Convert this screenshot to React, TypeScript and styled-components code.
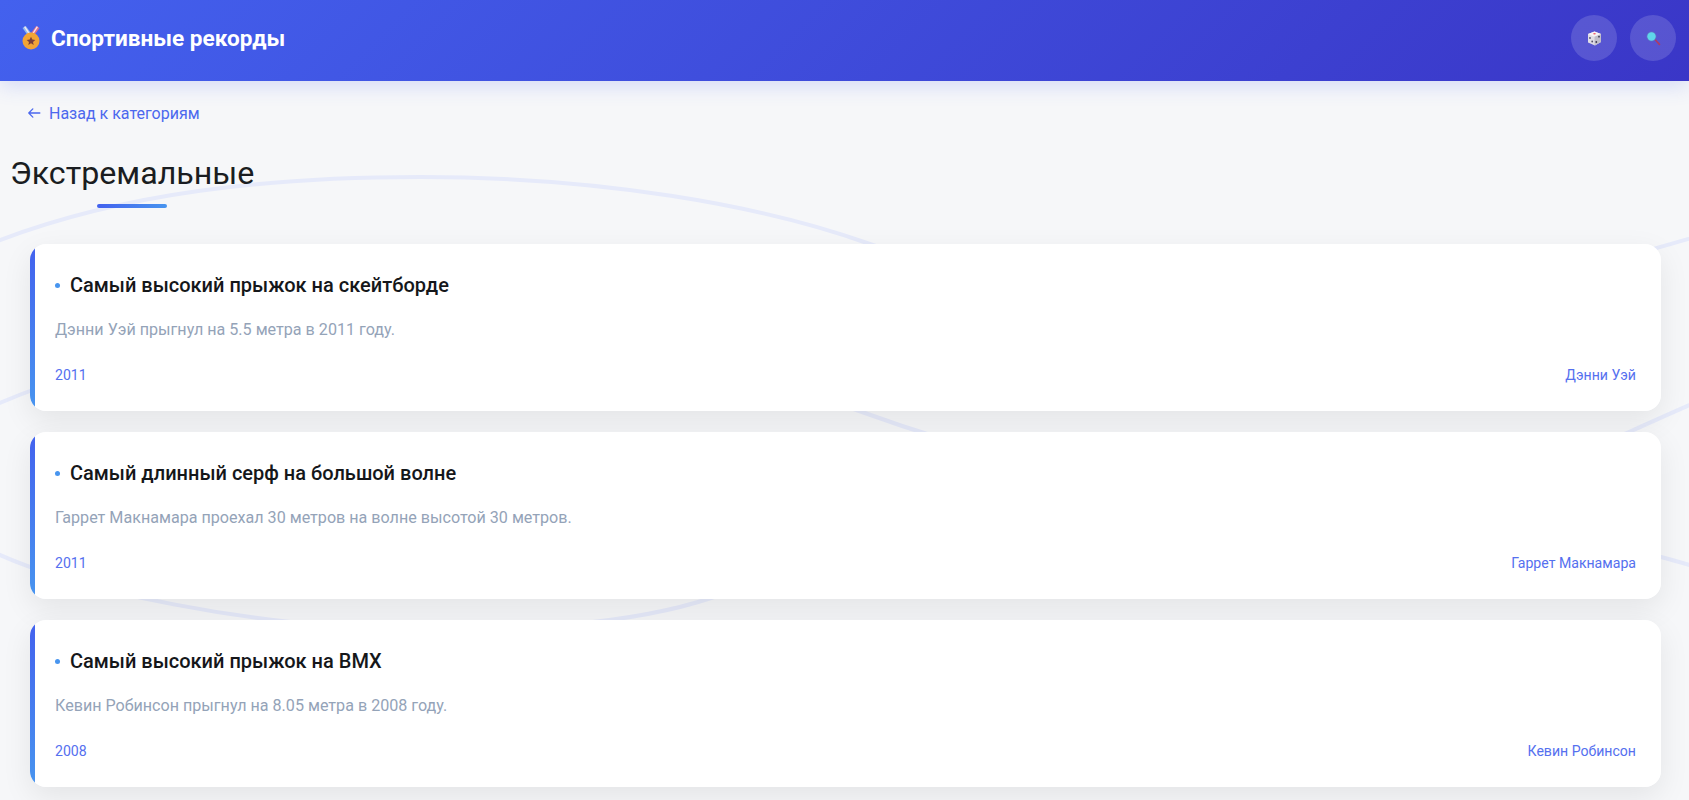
import React from "react";
import styled, { createGlobalStyle } from "styled-components";

const Global = createGlobalStyle`
  * { box-sizing: border-box; }
  html, body { margin: 0; padding: 0; }
  body {
    background: #f6f7f9;
    color: #212529;
    font-family: Roboto, "Noto Sans", sans-serif;
    overflow: hidden;
    height: 800px;
  }
`;

const Page = styled.div`
  position: relative;
  height: 800px;
  overflow: hidden;
`;

const Waves = styled.svg`
  position: absolute;
  inset: 0;
  width: 1689px;
  height: 800px;
  pointer-events: none;
`;

const Header = styled.header`
  position: relative;
  height: 81px;
  padding: 0 13px 5px 20px;
  display: flex;
  align-items: center;
  justify-content: space-between;
  background: linear-gradient(135deg, #4361ee, #3a36c7);
  box-shadow: 0 4px 20px rgba(67, 97, 238, 0.2);
`;

const Brand = styled.div`
  display: flex;
  align-items: center;
  gap: 9px;
  color: #fff;
  font-size: 22.6px;
  font-weight: 700;
`;

const Actions = styled.div`
  display: flex;
  gap: 13px;
`;

const RoundButton = styled.button`
  width: 46px;
  height: 46px;
  padding: 0;
  border: 0;
  border-radius: 50%;
  display: flex;
  align-items: center;
  justify-content: center;
  background: rgba(255, 255, 255, 0.15);
`;

const Main = styled.main`
  position: relative;
  padding: 0 28px 0 30px;
`;

const BackLink = styled.a`
  display: flex;
  align-items: center;
  gap: 8px;
  height: 20px;
  margin: 22px 0 0 -3px;
  font-size: 16px;
  color: #4361ee;
  opacity: 0.95;
`;

const PageTitle = styled.h2`
  position: relative;
  margin: 31px 0 0 -20px;
  width: 245px;
  height: 38px;
  font-size: 32.2px;
  line-height: 38px;
  font-weight: 400;
  color: #1a1d21;
  white-space: nowrap;
`;

const TitleBar = styled.span`
  position: absolute;
  left: 87px;
  top: 50px;
  width: 70px;
  height: 4px;
  border-radius: 2px;
  background: linear-gradient(90deg, #4361ee, #4895ef);
`;

const Cards = styled.div`
  display: flex;
  flex-direction: column;
  gap: 21px;
  margin-top: 52px;
`;

const CardShadow = styled.div`
  border-radius: 16px;
  box-shadow: 0 10px 30px rgba(0, 0, 0, 0.08);
`;

const Card = styled.article`
  position: relative;
  height: 167px;
  overflow: hidden;
  padding: 26px 25px 0;
  background: #fff;
  border-radius: 16px;
`;

const Accent = styled.span`
  position: absolute;
  left: 0;
  top: 0;
  bottom: 0;
  width: 5px;
  background: linear-gradient(180deg, #4361ee, #4895ef);
`;

const CardTitle = styled.h3`
  position: relative;
  margin: 0;
  padding-left: 15px;
  height: 30px;
  font-size: 20px;
  line-height: 30px;
  font-weight: 500;
  color: #15171a;

  &::before {
    content: "";
    position: absolute;
    left: 0;
    top: 13px;
    width: 5px;
    height: 5px;
    border-radius: 50%;
    background: #4895ef;
  }
`;

const Description = styled.p`
  margin: 18px 0 0;
  font-size: 16.12px;
  line-height: 24px;
  color: #94a3b8;
`;

const Meta = styled.div`
  display: flex;
  justify-content: space-between;
  margin-top: 23px;
  font-size: 14.1px;
  line-height: 20px;
  color: #4361ee;
  opacity: 0.9;
`;

const MedalIcon = () => (
  <svg width="22" height="24" viewBox="0 0 22 24">
    <path d="M2.500 2 9 11l3-2.500L5.800 0z" fill="#8fbdf0" />
    <path d="M4 1 9.800 9.800l1-.8L5.200 .3z" fill="#f7e6ee" />
    <path d="M19.500 2 13 11l-3-2.500L16.200 0z" fill="#e0708a" />
    <path d="M18 1 12.200 9.800l-1-.8L16.800 .3z" fill="#f7e6ee" />
    <circle cx="11" cy="15" r="8.500" fill="#f2a436" />
    <path d="m11 10.800 1.300 2.800 3 .3-2.300 2 .7 3-2.700-1.600-2.700 1.600.7-3-2.300-2 3-.3z" fill="#7b3f3a" />
  </svg>
);

const DiceIcon = () => (
  <svg width="15" height="15" viewBox="0 0 15 15">
    <path d="M7.500 .5 14 3v8l-6 3.500L1 11.500V3z" fill="#e0dee6" />
    <path d="M1 3l6.500 2.700L14 3 7.500.5z" fill="#f6f2f4" />
    <path d="M7.500 5.700V14.500l6.500-3.500V3z" fill="#bfbdca" />
    <ellipse cx="7.500" cy="2.800" rx="1.300" ry=".7" fill="#ee5a66" />
    <circle cx="3" cy="7" r=".9" fill="#55536a" />
    <circle cx="5.200" cy="10.500" r=".9" fill="#55536a" />
    <circle cx="12" cy="5.700" r=".9" fill="#3c3a4e" />
    <circle cx="9.300" cy="11" r=".9" fill="#3c3a4e" />
  </svg>
);

const SearchIcon = () => (
  <svg width="15" height="15" viewBox="0 0 15 15">
    <path d="m8.500 9 1-1 5 5.200-1.300 1.300z" fill="#b03a62" />
    <circle cx="5.500" cy="5.500" r="5" fill="#5e6fc4" />
    <circle cx="5.500" cy="5.500" r="4.200" fill="#5fd6ea" />
  </svg>
);

const BackArrow = () => (
  <svg width="14" height="14" viewBox="0 0 24 24" fill="none" stroke="currentColor" strokeWidth="2.200" strokeLinecap="round" strokeLinejoin="round">
    <path d="M22 12H3M10 5l-7 7 7 7" />
  </svg>
);

const records = [
  { title: "Самый высокий прыжок на скейтборде", text: "Дэнни Уэй прыгнул на 5.5 метра в 2011 году.", year: "2011", author: "Дэнни Уэй" },
  { title: "Самый длинный серф на большой волне", text: "Гаррет Макнамара проехал 30 метров на волне высотой 30 метров.", year: "2011", author: "Гаррет Макнамара" },
  { title: "Самый высокий прыжок на BMX", text: "Кевин Робинсон прыгнул на 8.05 метра в 2008 году.", year: "2008", author: "Кевин Робинсон" },
];

export default function App() {
  return (
    <Page>
      <Global />
      <Waves viewBox="0 0 1689 800" fill="none">
        <path
          d="M-20 248C120 190 280 177 420 177C600 177 760 205 867 243C1000 290 1130 320 1260 320C1420 320 1560 275 1720 230"
          stroke="#e6eafa"
          strokeWidth="4"
        />
        <path
          d="M-20 412C120 345 280 340 420 342C600 345 760 375 862 412C1000 462 1130 490 1260 490C1400 490 1520 480 1629 432C1660 418 1700 400 1720 392"
          stroke="#e6eafa"
          strokeWidth="4"
        />
        <path
          d="M-20 545C60 590 270 630 420 630C520 630 630 625 711 598C850 550 1100 500 1260 500C1420 500 1560 530 1661 557C1680 562 1700 568 1720 574"
          stroke="#e6eafa"
          strokeWidth="4"
        />
      </Waves>
      <Header>
        <Brand>
          <MedalIcon />
          Спортивные рекорды
        </Brand>
        <Actions>
          <RoundButton aria-label="Случайный рекорд">
            <DiceIcon />
          </RoundButton>
          <RoundButton aria-label="Поиск">
            <SearchIcon />
          </RoundButton>
        </Actions>
      </Header>
      <Main>
        <BackLink>
          <BackArrow />
          Назад к категориям
        </BackLink>
        <PageTitle>
          Экстремальные
          <TitleBar />
        </PageTitle>
        <Cards>
          {records.map((r) => (
            <CardShadow key={r.title}>
              <Card>
                <Accent />
                <CardTitle>{r.title}</CardTitle>
                <Description>{r.text}</Description>
                <Meta>
                  <span>{r.year}</span>
                  <span>{r.author}</span>
                </Meta>
              </Card>
            </CardShadow>
          ))}
        </Cards>
      </Main>
    </Page>
  );
}
